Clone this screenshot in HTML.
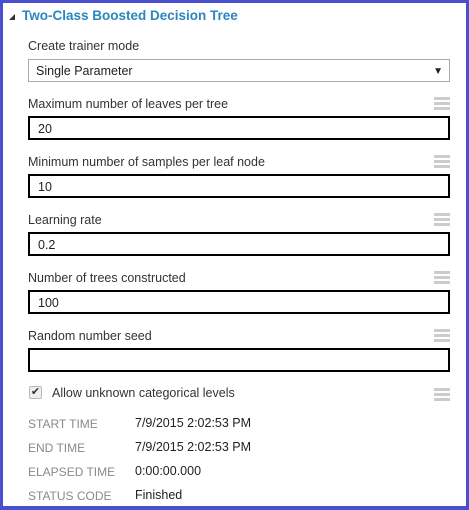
<!DOCTYPE html>
<html><head><style>
*{margin:0;padding:0;box-sizing:border-box}
body{width:469px;height:510px;background:#fff;font-family:"Liberation Sans",sans-serif;position:relative;overflow:hidden;color:#222}
.frame{position:absolute;left:0;top:0;width:469px;height:510px;border:3px solid #4a4fcf;border-bottom-width:4px}
.a{position:absolute;white-space:nowrap}
.title{left:22px;top:8px;font-size:13.5px;font-weight:bold;color:#2a86bd}
.tri{left:9px;top:14px;width:0;height:0;border-left:6px solid transparent;border-bottom:6px solid #333}
.lbl{font-size:12.5px;color:#333;left:28px}
.inp{left:28px;width:422px;height:24px;border:2px solid #000;font-size:12.5px;padding:4px 0 0 8px}
.sel{left:28px;top:59px;width:422px;height:23px;border:1px solid #aaa;font-size:12.5px;padding:4px 0 0 7px}
.ham{left:434px;width:16px;height:13px;border-top:3px solid #ccc;border-bottom:3px solid #ccc}
.ham::after{content:"";position:absolute;left:0;right:0;top:2px;height:3px;background:#ccc}
.k{left:28px;font-size:12px;color:#8a8a8a}
.v{left:135px;font-size:12.5px;color:#222}
</style></head><body>
<div class="frame"></div>
<div class="a tri"></div>
<div class="a title">Two-Class Boosted Decision Tree</div>
<div class="a lbl" style="top:39px">Create trainer mode</div>
<div class="a sel">Single Parameter<span style="position:absolute;right:6px;top:6px;font-size:10px">▼</span></div>

<div class="a lbl" style="top:97px">Maximum number of leaves per tree</div><div class="a ham" style="top:97px"></div>
<div class="a inp" style="top:116px">20</div>
<div class="a lbl" style="top:155px">Minimum number of samples per leaf node</div><div class="a ham" style="top:155px"></div>
<div class="a inp" style="top:174px">10</div>
<div class="a lbl" style="top:213px">Learning rate</div><div class="a ham" style="top:213px"></div>
<div class="a inp" style="top:232px">0.2</div>
<div class="a lbl" style="top:271px">Number of trees constructed</div><div class="a ham" style="top:271px"></div>
<div class="a inp" style="top:290px">100</div>
<div class="a lbl" style="top:329px">Random number seed</div><div class="a ham" style="top:329px"></div>
<div class="a inp" style="top:348px"></div>

<div class="a" style="left:29px;top:386px;width:13px;height:13px;border:1px solid #bbb;border-radius:2px;background:#eee;font-size:11px;line-height:11px;text-align:center;color:#333">✔</div>
<div class="a lbl" style="left:52px;top:386px">Allow unknown categorical levels</div><div class="a ham" style="top:388px"></div>

<div class="a k" style="top:417px">START TIME</div><div class="a v" style="top:416px">7/9/2015 2:02:53 PM</div>
<div class="a k" style="top:441px">END TIME</div><div class="a v" style="top:440px">7/9/2015 2:02:53 PM</div>
<div class="a k" style="top:465px">ELAPSED TIME</div><div class="a v" style="top:464px">0:00:00.000</div>
<div class="a k" style="top:489px">STATUS CODE</div><div class="a v" style="top:488px">Finished</div>
</body></html>
